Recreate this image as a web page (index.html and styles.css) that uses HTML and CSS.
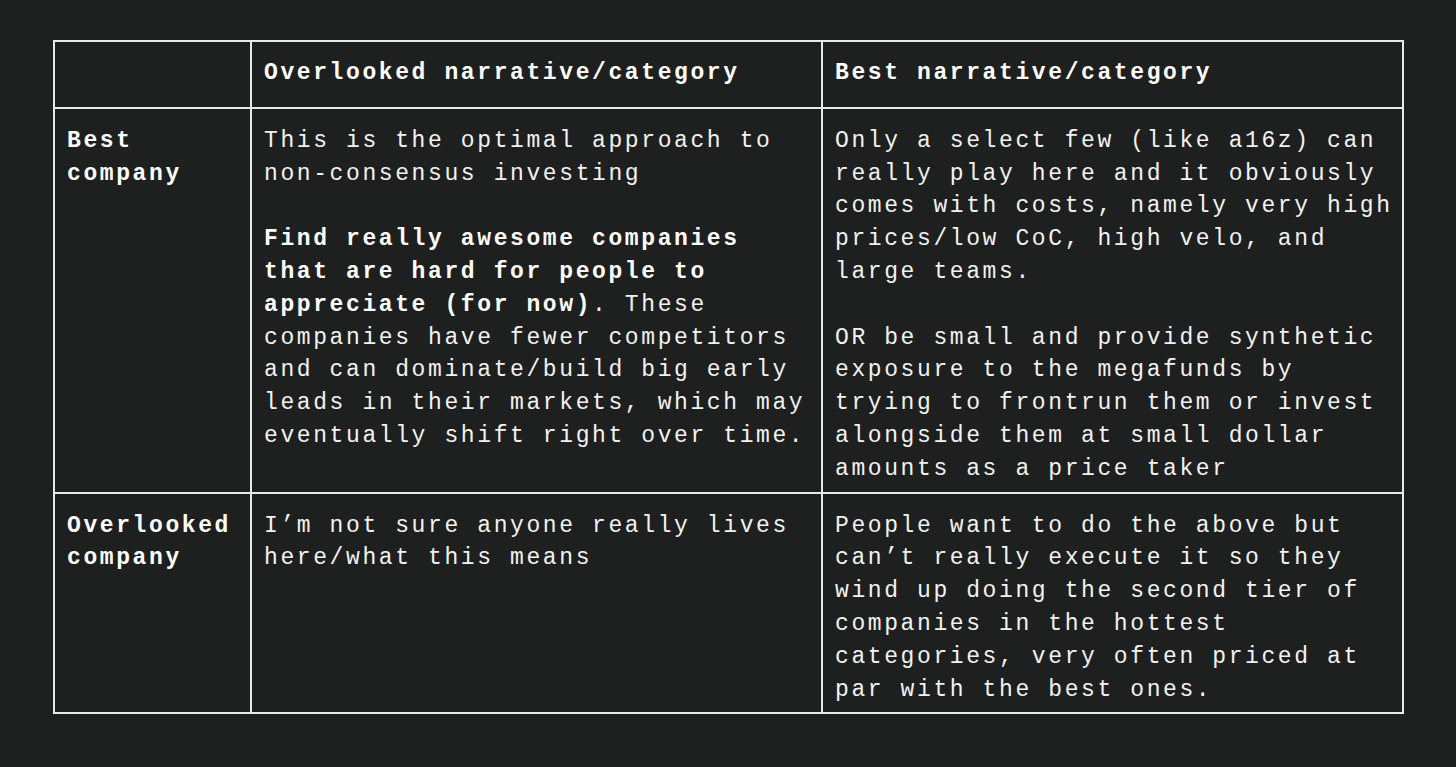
FILE: index.html
```html
<!DOCTYPE html>
<html lang="en">
<head>
<meta charset="utf-8">
<title>Narrative vs company</title>
<link rel="stylesheet" href="styles.css">
</head>
<body>
<main class="page">
  <table class="grid">
    <colgroup>
      <col class="c-label">
      <col class="c-over">
      <col class="c-best">
    </colgroup>
    <thead>
      <tr class="head-row">
        <th class="cell head"></th>
        <th class="cell head">Overlooked narrative/category</th>
        <th class="cell head">Best narrative/category</th>
      </tr>
    </thead>
    <tbody>
      <tr>
        <th class="cell label">Best company</th>
        <td class="cell">
          <p class="para">This is the optimal approach to non-consensus investing</p>
          <p class="para"><strong class="em">Find really awesome companies that are hard for people to appreciate (for now)</strong>. These companies have fewer competitors and can dominate/build big early leads in their markets, which may eventually shift right over time.</p>
        </td>
        <td class="cell">
          <p class="para">Only a select few (like a16z) can really play here and it obviously comes with costs, namely very high prices/low CoC, high velo, and large teams.</p>
          <p class="para">OR be small and provide synthetic exposure to the megafunds by trying to frontrun them or invest alongside them at small dollar amounts as a price taker</p>
        </td>
      </tr>
      <tr>
        <th class="cell label">Overlooked company</th>
        <td class="cell">
          <p class="para">I’m not sure anyone really lives here/what this means</p>
        </td>
        <td class="cell">
          <p class="para">People want to do the above but can’t really execute it so they wind up doing the second tier of companies in the hottest categories, very often priced at par with the best ones.</p>
        </td>
      </tr>
    </tbody>
  </table>
</main>
</body>
</html>
```

FILE: styles.css
```css
html, body {
  margin: 0;
  padding: 0;
  background: #1e1f1f;
}

.page {
  padding: 40px 0 0 53px;
}

.grid {
  border-collapse: collapse;
  width: 1349px;
  table-layout: fixed;
  font-family: "Liberation Mono", "Courier New", monospace;
  font-size: 23px;
  letter-spacing: 2.6px;
  line-height: 32.8px;
  color: #f2f2f2;
}

.c-label { width: 197px; }
.c-over { width: 571px; }
.c-best { width: 581px; }

.cell {
  border: 2px solid #e9e9e9;
  padding: 16px 6px 6px 12px;
  vertical-align: top;
  text-align: left;
  font-weight: normal;
}

.head {
  font-weight: bold;
  color: #ffffff;
  padding: 15px 6px 17px 12px;
}

.label {
  font-weight: bold;
  color: #ffffff;
}

.para {
  margin: 0;
}

.para + .para {
  margin-top: 32.8px;
}

.em {
  font-weight: bold;
  color: #ffffff;
}
```
